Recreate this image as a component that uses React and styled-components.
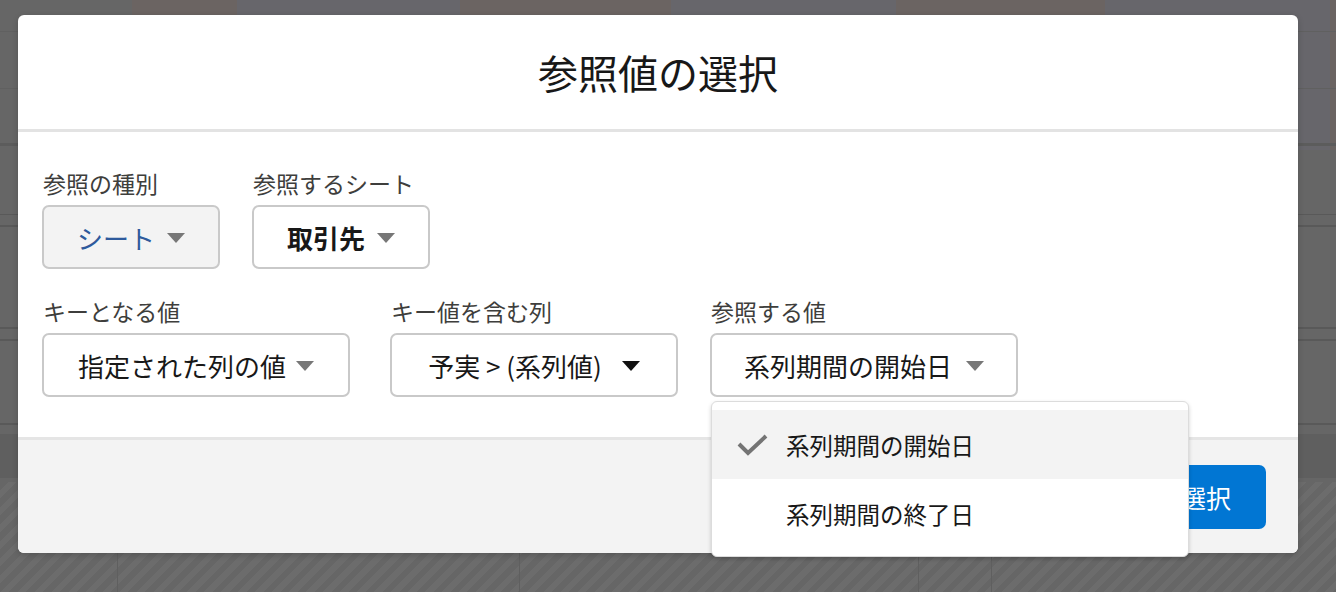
import React from 'react';
import styled, { createGlobalStyle } from 'styled-components';

const GlobalStyle = createGlobalStyle`
    html, body {
        margin: 0;
        padding: 0;
        width: 1336px;
        height: 592px;
        overflow: hidden;
        background: #666666;
        font-family: "Noto Sans CJK JP", "Noto Sans", sans-serif;
    }
`;

const Page = styled.div`
    position: relative;
    width: 1336px;
    height: 592px;
    overflow: hidden;
`;

/* dimmed application behind the modal */
const Backdrop = styled.div`
    display: flex;
    flex-direction: column;
    height: 100%;
`;

const HeaderBand = styled.div`
    display: flex;
    height: 150px;
`;

const HeaderCol = styled.div`
    width: ${p => p.w}px;
    flex-shrink: 0;
    background: ${p => p.tone === 'warm' ? '#6b6462' : p.tone === 'cool' ? '#67666b' : '#666666'};
    background-image: linear-gradient(#606060, #606060), linear-gradient(#606060, #606060), linear-gradient(#5c5c5c, #5c5c5c);
    background-size: 100% 1px, 100% 1px, 100% 3px;
    background-position: 0 31px, 0 88px, 0 143px;
    background-repeat: no-repeat;
`;

const GridArea = styled.div`
    display: flex;
    flex-direction: column;
    height: 332px;
    background: #666666;
`;

const GridRow = styled.div`
    height: ${p => p.h}px;
    flex-shrink: 0;
    border-bottom: ${p => p.line}px solid #595959;
    background: ${p => p.dark ? '#5f5f5f' : 'transparent'};
`;

const Striped = styled.div`
    flex: 1;
    display: flex;
    background: repeating-linear-gradient(135deg, #666666 0 6px, #6c6c6c 6px 12px);
`;

const StripeCol = styled.div`
    width: ${p => p.w}px;
    flex-shrink: 0;
    border-right: 1px solid #5f5f5f;
    display: flex;
    justify-content: ${p => p.plus ? 'center' : 'flex-start'};
    color: #5a5a5a;
    font-size: 40px;
    line-height: 80px;
    font-weight: 300;
`;

/* modal */
const Modal = styled.div`
    position: absolute;
    left: 18px;
    top: 15px;
    width: 1280px;
    height: 538px;
    border-radius: 6px;
    background: #ffffff;
    display: flex;
    flex-direction: column;
    box-shadow: 0 2px 6px rgba(0, 0, 0, 0.18);
`;

const ModalHeader = styled.div`
    height: 114px;
    display: flex;
    align-items: center;
    justify-content: center;
    border-bottom: 3px solid #e3e3e3;
`;

const Title = styled.h2`
    margin: 0;
    font-size: 40px;
    font-weight: 400;
    color: #181818;
    line-height: 1;
`;

const ModalBody = styled.div`
    height: 308px;
    box-sizing: border-box;
    padding: 36px 24px 0;
    border-bottom: 3px solid #e5e5e5;
    display: flex;
    flex-direction: column;
    gap: 27px;
`;

const FieldRow = styled.div`
    display: flex;
    align-items: flex-start;
`;

const Field = styled.div`
    display: flex;
    flex-direction: column;
    gap: 7px;
    margin-right: ${p => p.gap}px;
    position: relative;
`;

const Label = styled.div`
    font-size: 23px;
    line-height: 30px;
    color: #3e3e3c;
    padding-left: 1px;
`;

const SelectBox = styled.div`
    width: ${p => p.w}px;
    height: 64px;
    box-sizing: border-box;
    border: 2px solid #c9c9c9;
    border-radius: 7px;
    background: ${p => p.disabled ? '#f3f3f3' : '#ffffff'};
    display: flex;
    align-items: center;
    justify-content: center;
    gap: ${p => p.gap || 12}px;
    font-size: 26px;
    color: ${p => p.disabled ? '#2e5a9c' : '#181818'};
    font-weight: ${p => p.bold ? 700 : 400};
`;

const Caret = styled.span`
    width: 0;
    height: 0;
    border-left: 9px solid transparent;
    border-right: 9px solid transparent;
    border-top: 10px solid ${p => p.dark ? '#111111' : '#777777'};
    margin-top: 2px;
`;

const Menu = styled.div`
    position: absolute;
    top: 105px;
    left: 1px;
    width: 478px;
    box-sizing: border-box;
    padding: 8px 0;
    background: #ffffff;
    border: 1px solid #dcdcdc;
    border-radius: 6px;
    box-shadow: 0 2px 4px rgba(0, 0, 0, 0.18);
    z-index: 2;
`;

const MenuItem = styled.div`
    height: 69px;
    display: flex;
    align-items: center;
    padding-left: 25px;
    gap: 18px;
    background: ${p => p.active ? '#f3f3f3' : '#ffffff'};
    font-size: 23.5px;
    color: #181818;
`;

const CheckSlot = styled.span`
    width: 31px;
    display: flex;
    align-items: center;
`;

const ModalFooter = styled.div`
    flex: 1;
    background: #f3f3f3;
    border-radius: 0 0 6px 6px;
    display: flex;
    justify-content: flex-end;
    align-items: flex-start;
    padding: 25px 32px 0;
`;

const PrimaryButton = styled.button`
    width: 120px;
    height: 64px;
    border: none;
    border-radius: 7px;
    background: #0176d3;
    color: #ffffff;
    font-family: inherit;
    font-size: 25px;
`;

const headerCols = [
    [132, 'plain'], [105, 'warm'], [223, 'cool'], [211, 'warm'], [225, 'cool'], [209, 'warm'], [225, 'cool'], [6, 'warm'],
];

function Check() {
    return (
        <svg width="31" height="24" viewBox="0 0 31 24">
            <path d="M2 11 L11 20 L29 3" fill="none" stroke="#747474" strokeWidth="4" />
        </svg>
    );
}

export default function App() {
    return (
        <Page>
            <GlobalStyle />
            <Backdrop>
                <HeaderBand>
                    {headerCols.map(([w, tone], i) => <HeaderCol key={i} w={w} tone={tone} />)}
                </HeaderBand>
                <GridArea>
                    <GridRow h={64} line={1} />
                    <GridRow h={10} line={2} />
                    <GridRow h={100} line={2} />
                    <GridRow h={10} line={2} />
                    <GridRow h={82} line={2} />
                    <GridRow h={9} line={0} />
                    <GridRow h={44} line={0} dark />
                </GridArea>
                <Striped>
                    <StripeCol w={117} />
                    <StripeCol w={401} plus>+</StripeCol>
                    <StripeCol w={398} plus>+</StripeCol>
                    <StripeCol w={72} />
                </Striped>
            </Backdrop>

            <Modal>
                <ModalHeader>
                    <Title>参照値の選択</Title>
                </ModalHeader>

                <ModalBody>
                    <FieldRow>
                        <Field gap={32}>
                            <Label>参照の種別</Label>
                            <SelectBox w={178} disabled>シート<Caret /></SelectBox>
                        </Field>
                        <Field gap={0}>
                            <Label>参照するシート</Label>
                            <SelectBox w={178} bold>取引先<Caret /></SelectBox>
                        </Field>
                    </FieldRow>

                    <FieldRow>
                        <Field gap={40}>
                            <Label>キーとなる値</Label>
                            <SelectBox w={308} gap={10}>指定された列の値<Caret /></SelectBox>
                        </Field>
                        <Field gap={32}>
                            <Label>キー値を含む列</Label>
                            <SelectBox w={288} gap={20}>予実 &gt; (系列値)<Caret dark /></SelectBox>
                        </Field>
                        <Field gap={0}>
                            <Label>参照する値</Label>
                            <SelectBox w={308} gap={14}>系列期間の開始日<Caret /></SelectBox>
                            <Menu>
                                <MenuItem active>
                                    <CheckSlot><Check /></CheckSlot>
                                    系列期間の開始日
                                </MenuItem>
                                <MenuItem>
                                    <CheckSlot />
                                    系列期間の終了日
                                </MenuItem>
                            </Menu>
                        </Field>
                    </FieldRow>
                </ModalBody>

                <ModalFooter>
                    <PrimaryButton>選択</PrimaryButton>
                </ModalFooter>
            </Modal>
        </Page>
    );
}
